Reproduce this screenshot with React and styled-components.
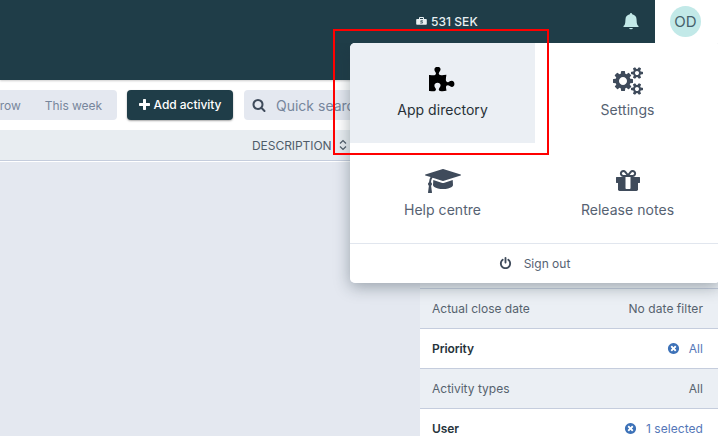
import React from "react";
import styled, { createGlobalStyle, css } from "styled-components";

const GlobalStyle = createGlobalStyle`
  *, *::before, *::after { box-sizing: border-box; }
  body { margin: 0; overflow: hidden; }
  button { font: inherit; letter-spacing: inherit; border: 0; padding: 0; background: none; color: inherit; }
`;

const ICONS = {
  puzzle: {
    width: 1664,
    minX: 128,
    d: "M1755 1083q0 81-44.5 135t-123.5 54q-41 0-77.5-17.5t-59-38-56.5-38-71-17.5q-110 0-110 124 0 39 16 115t15 115v5q-22 0-33 1-34 3-97.5 11.5t-115.5 13.5-98 5q-61 0-103-26.5t-42-83.5q0-37 17.5-71t38-56.5 38-59 17.5-77.5q0-79-54-123.5t-135-44.5q-84 0-143 45.5t-59 127.5q0 43 15 83t33.5 64.5 33.5 53 15 50.5q0 45-46 89-37 35-117 35-95 0-245-24-9-2-27.5-4t-27.5-4l-13-2q-1 0-3-1-2 0-2-1v-1024q2 1 17.5 3.5t34 5 21.5 3.5q150 24 245 24 80 0 117-35 46-44 46-89 0-22-15-50.5t-33.5-53-33.5-64.5-15-83q0-82 59-127.5t144-45.5q80 0 134 44.5t54 123.5q0 41-17.5 77.5t-38 59-38 56.5-17.5 71q0 57 42 83.5t103 26.5q64 0 180-15t163-17v2q-1 2-3.5 17.5t-5 34-3.5 21.5q-24 150-24 245 0 80 35 117 44 46 89 46 22 0 50.5-15t53-33.5 64.5-33.5 83-15q82 0 127.5 59t45.5 143z",
  },
  cogs: {
    width: 1920,
    d: "M896 896q0-106-75-181t-181-75-181 75-75 181 75 181 181 75 181-75 75-181zm768 512q0-52-38-90t-90-38-90 38-38 90q0 53 37.5 90.5t90.5 37.5 90.5-37.5 37.5-90.5zm0-1024q0-52-38-90t-90-38-90 38-38 90q0 53 37.5 90.5t90.5 37.5 90.5-37.5 37.5-90.5zm-384 421v185q0 10-7 19.5t-16 10.5l-155 24q-11 35-32 76 34 48 90 115 7 11 7 20 0 12-7 19-23 30-82.5 89.5t-78.5 59.5q-11 0-21-7l-115-90q-37 19-77 31-11 108-23 155-7 24-30 24h-186q-11 0-20-7.5t-10-17.5l-23-153q-34-10-75-31l-118 89q-7 7-20 7-11 0-21-8-144-133-144-160 0-9 7-19 10-14 41-53t47-61q-23-44-35-82l-152-24q-10-1-17-9.5t-7-19.5v-185q0-10 7-19.5t16-10.5l155-24q11-35 32-76-34-48-90-115-7-11-7-20 0-12 7-20 22-30 82-89t79-59q11 0 21 7l115 90q34-18 77-32 11-108 23-154 7-24 30-24h186q11 0 20 7.5t10 17.5l23 153q34 10 75 31l118-89q8-7 20-7 11 0 21 8 144 133 144 160 0 8-7 19-12 16-42 54t-45 60q23 48 34 82l152 23q10 2 17 10.5t7 19.5zm640 533v140q0 16-149 31-12 27-30 52 51 113 51 138 0 4-4 7-122 71-124 71-8 0-46-47t-52-68q-20 2-30 2t-30-2q-14 21-52 68t-46 47q-2 0-124-71-4-3-4-7 0-25 51-138-18-25-30-52-149-15-149-31v-140q0-16 149-31 13-29 30-52-51-113-51-138 0-4 4-7 4-2 35-20t59-34 30-16q8 0 46 46.5t52 67.5q20-2 30-2t30 2q51-71 92-112l6-2q4 0 124 70 4 3 4 7 0 25-51 138 17 23 30 52 149 15 149 31zm0-1024v140q0 16-149 31-12 27-30 52 51 113 51 138 0 4-4 7-122 71-124 71-8 0-46-47t-52-68q-20 2-30 2t-30-2q-14 21-52 68t-46 47q-2 0-124-71-4-3-4-7 0-25 51-138-18-25-30-52-149-15-149-31v-140q0-16 149-31 13-29 30-52-51-113-51-138 0-4 4-7 4-2 35-20t59-34 30-16q8 0 46 46.5t52 67.5q20-2 30-2t30 2q51-71 92-112l6-2q4 0 124 70 4 3 4 7 0 25-51 138 17 23 30 52 149 15 149 31z",
  },
  graduation: {
    width: 2304,
    d: "M1774 836l18 316q4 69-82 128t-235 93.5-323 34.5-323-34.5-235-93.5-82-128l18-316 574 181q22 7 48 7t48-7zm530-324q0 23-22 31l-1120 352q-4 1-10 1t-10-1l-652-206q-43 34-71 111.5t-34 178.5q63 36 63 109 0 69-58 107l58 433q2 14-8 25-9 11-24 11h-192q-15 0-24-11-10-11-8-25l58-433q-58-38-58-107 0-73 65-111 11-207 98-330l-333-104q-22-8-22-31t22-31l1120-352q4-1 10-1t10 1l1120 352q22 8 22 31z",
  },
  gift: {
    width: 1792,
    d: "M1056 1356v-716h-320v716q0 25 18 38.5t46 13.5h192q28 0 46-13.5t18-38.5zm-456-844h195l-126-161q-26-31-69-31-40 0-68 28t-28 68 28 68 68 28zm688-96q0-40-28-68t-68-28q-43 0-69 31l-125 161h194q40 0 68-28t28-68zm376 256v320q0 14-9 23t-23 9h-96v416q0 40-28 68t-68 28h-1088q-40 0-68-28t-28-68v-416h-96q-14 0-23-9t-9-23v-320q0-14 9-23t23-9h440q-93 0-158.5-65.5t-65.5-158.5 65.5-158.5 158.5-65.5q107 0 168 77l128 165 128-165q61-77 168-77 93 0 158.5 65.5t65.5 158.5-65.5 158.5-158.5 65.5h440q14 0 23 9t9 23z",
  },
  power: {
    width: 1792,
    d: "M1664 896q0 156-61 298t-164 245-245 164-298 61-298-61-245-164-164-245-61-298q0-182 80.5-343t226.5-270q43-32 95.5-25t83.5 50q32 42 24.5 94.5t-49.5 84.5q-98 74-151.5 181t-53.5 228q0 104 40.5 198.5t109.5 163.5 163.5 109.5 198.5 40.5 198.5-40.5 163.5-109.5 109.5-163.5 40.5-198.5q0-121-53.5-228t-151.5-181q-42-32-49.5-84.5t24.5-94.5q31-43 84-50t95 25q146 109 226.5 270t80.5 343zm-640-768v640q0 52-38 90t-90 38-90-38-38-90v-640q0-52 38-90t90-38 90 38 38 90z",
  },
  clear: {
    width: 1792,
    d: "M1277 1122q0-26-19-45l-181-181 181-181q19-19 19-45 0-27-19-46l-90-90q-19-19-46-19-26 0-45 19l-181 181-181-181q-19-19-45-19-27 0-46 19l-90 90q-19 19-19 46 0 26 19 45l181 181-181 181q-19 19-19 45 0 27 19 46l90 90q19 19 46 19 26 0 45-19l181-181 181 181q19 19 45 19 27 0 46-19l90-90q19-19 19-46zm387-226q0 209-103 385.5t-279.5 279.5-385.5 103-385.5-103-279.5-279.5-103-385.5 103-385.5 279.5-279.5 385.5-103 385.5 103 279.5 279.5 103 385.5z",
  },
  search: {
    width: 1792,
    d: "M1216 832q0-185-131.5-316.5t-316.5-131.5-316.5 131.5-131.5 316.5 131.5 316.5 316.5 131.5 316.5-131.5 131.5-316.5zm512 832q0 52-38 90t-90 38q-54 0-90-38l-343-342q-179 124-399 124-143 0-273.5-55.5t-225-150-150-225-55.5-273.5 55.5-273.5 150-225 225-150 273.5-55.5 273.5 55.5 225 150 150 225 55.5 273.5q0 220-124 399l343 343q37 37 37 90z",
  },
  plus: {
    width: 1408,
    minX: 192,
    d: "M1600 736v192q0 40-28 68t-68 28h-416v416q0 40-28 68t-68 28h-192q-40 0-68-28t-28-68v-416h-416q-40 0-68-28t-28-68v-192q0-40 28-68t68-28h416v-416q0-40 28-68t68-28h192q40 0 68 28t28 68v416h416q40 0 68 28t28 68z",
  },
};

const Svg = styled.svg`
  display: block;
  flex: none;
  fill: currentColor;
`;

function Icon({ name, size }) {
  const { width, minX = 0, d } = ICONS[name];
  return (
    <Svg
      width={(width / 1792) * size}
      height={size}
      viewBox={`${minX} 0 ${width} 1792`}
      aria-hidden="true"
    >
      <path d={d} />
    </Svg>
  );
}

const Page = styled.div`
  position: relative;
  display: flex;
  flex-direction: column;
  width: 718px;
  height: 436px;
  overflow: hidden;
  background: #e4e8f0;
  font-family: Inter, "Liberation Sans", sans-serif;
  font-size: 12px;
  color: #3f4b5b;
  white-space: nowrap;
`;

const Header = styled.header`
  position: relative;
  display: flex;
  flex: none;
  height: 80px;
  padding-left: 415px;
  background: #1f3d48;
  box-shadow: 0 1px 2px rgba(0, 0, 0, 0.2);
`;

const Pipeline = styled.div`
  display: flex;
  align-items: center;
  gap: 4px;
  height: 43px;
  width: 192px;
  padding-left: 1px;
  font-size: 12px;
  font-weight: 500;
  letter-spacing: 0.05px;
  color: #e8f0f2;
`;

const NotificationButton = styled.button`
  display: flex;
  align-items: center;
  justify-content: center;
  width: 48px;
  height: 43px;
  color: #c2e9e8;
`;

const Account = styled.div`
  display: flex;
  align-items: center;
  flex: 1;
  height: 48px;
  padding: 0 0 5px 15px;
  background: #fff;
`;

const Avatar = styled.div`
  display: flex;
  align-items: center;
  justify-content: center;
  width: 31px;
  height: 31px;
  border-radius: 50%;
  background: #c2e9e8;
  color: #45606b;
  font-size: 15px;
`;

const Toolbar = styled.div`
  display: flex;
  align-items: center;
  flex: none;
  gap: 10px;
  height: 50px;
  background: #fff;
`;

const PeriodGroup = styled.div`
  display: flex;
  align-items: center;
  justify-content: flex-end;
  gap: 24px;
  width: 117px;
  height: 30px;
  padding-right: 15px;
  border-radius: 0 4px 4px 0;
  background: #e4e8f0;
  color: #77869c;
  font-size: 12px;
  letter-spacing: -0.05px;
`;

const AddButton = styled.button`
  display: flex;
  align-items: center;
  justify-content: center;
  gap: 4px;
  width: 106px;
  height: 30px;
  padding-bottom: 1px;
  border-radius: 4px;
  background: #1f3d48;
  box-shadow: 0 1px 2px rgba(0, 0, 0, 0.35);
  color: #fff;
  font-size: 12px;
  font-weight: 500;
  letter-spacing: -0.05px;
`;

const SearchBox = styled.div`
  display: flex;
  align-items: center;
  gap: 10px;
  flex: 1;
  height: 30px;
  padding-left: 8px;
  margin-left: 1px;
  border-radius: 4px;
  background: #e4e8f0;
  color: #3f4b5b;
`;

const Placeholder = styled.span`
  color: #77869c;
  font-size: 14px;
`;

const TableHead = styled.div`
  display: flex;
  align-items: center;
  flex: none;
  gap: 7px;
  height: 32px;
  padding: 0 0 1px 252px;
  border-bottom: 1px solid #fff;
  box-shadow: inset 0 -1px #c5cddd;
  background: #e8edf1;
  color: #4f5c69;
  font-size: 12px;
  letter-spacing: -0.05px;
`;

const Content = styled.main`
  display: flex;
  flex: 1;
  min-height: 0;
  justify-content: flex-end;
`;

const FilterPanel = styled.aside`
  width: 298px;
  padding-top: 126px;
  background: #ebeff4;
`;

const FilterRow = styled.div`
  display: flex;
  align-items: center;
  justify-content: space-between;
  height: 40px;
  padding: 0 15px 0 12px;
  border-top: 1px solid #c5cddd;
  background: ${(p) => (p.$active ? "#fff" : "#ebeff4")};
  color: #56626e;
  font-size: 12px;
`;

const FilterLabel = styled.span`
  ${(p) =>
    p.$active &&
    css`
      color: #26333b;
      font-weight: 600;
      letter-spacing: -0.08px;
    `}
`;

const FilterValue = styled.span`
  display: flex;
  align-items: center;
  gap: 9px;
  letter-spacing: 0.06px;
  ${(p) => p.$active && "color: #5577b8;"}

  svg { color: #3d72b8; }
`;

const Menu = styled.nav`
  position: absolute;
  top: 43px;
  left: 350px;
  width: 370px;
  height: 240px;
  overflow: hidden;
  border-radius: 5px;
  background: #fff;
`;

const MenuShadow = styled.div`
  position: absolute;
  top: 43px;
  left: 350px;
  width: 370px;
  height: 240px;
  border-radius: 5px;
  box-shadow: 0 4px 16px rgba(31, 50, 60, 0.38);
  clip-path: inset(0 -20px -30px -30px);
`;

const MenuGrid = styled.div`
  display: grid;
  grid-template-columns: 185px 185px;
  grid-auto-rows: 100px;
`;

const MenuItem = styled.button`
  display: flex;
  flex-direction: column;
  align-items: center;
  padding-top: 24px;
  gap: 6px;
  background: ${(p) => (p.$selected ? "#ebeff4" : "#fff")};
  color: ${(p) => (p.$selected ? "#000" : "#3f4b5b")};

  svg { margin-left: ${(p) => (p.$selected ? "-1px" : 0)}; }
`;

const MenuLabel = styled.span`
  font-size: 14px;
  line-height: 18px;
  letter-spacing: 0.04px;
  color: ${(p) => (p.$selected ? "#273037" : "#566272")};
`;

const SignOut = styled.button`
  display: flex;
  align-items: center;
  justify-content: center;
  gap: 12px;
  width: 100%;
  height: 40px;
  padding-right: 1px;
  border-top: 1px solid #e1e6ee;
  font-size: 12px;
`;

const SignOutLabel = styled.span`
  color: #566272;
`;

const Highlight = styled.div`
  position: absolute;
  top: 29px;
  left: 333px;
  width: 216px;
  height: 126px;
  border: 2px solid #ff0000;
  pointer-events: none;
`;

const MENU = [
  { icon: "puzzle", label: "App directory", selected: true },
  { icon: "cogs", label: "Settings" },
  { icon: "graduation", label: "Help centre" },
  { icon: "gift", label: "Release notes" },
];

const FILTERS = [
  { label: "Actual close date", value: "No date filter" },
  { label: "Priority", value: "All", active: true },
  { label: "Activity types", value: "All" },
  { label: "User", value: "1 selected", active: true },
];

function CaseIcon() {
  return (
    <Svg width="11" height="9" viewBox="0 0 11 9" aria-hidden="true">
      <path
        fillRule="evenodd"
        d="M3 2V1q0-1 1-1h3q1 0 1 1v1h2q.8 0 .8.8V7q0 .8-.8.8H1Q.2 7.800.2 7V2.800Q.2 2 1 2zM4 2h3V1H4z"
      />
      <path d="M6.900 3.700H4.800v1.100h1.600v1.300H4.200" fill="none" stroke="#1f3d48" strokeWidth=".7" />
    </Svg>
  );
}

function BellIcon() {
  return (
    <Svg width="16" height="17" viewBox="0 0 16 17" aria-hidden="true">
      <path d="M8 0q1 0 1.200 1.300Q13.300 2.200 13.500 6q.1 4.200.9 5.900l1.100 1.100v.9H.5V13l1.100-1.100Q2.400 10.200 2.500 6 2.700 2.200 6.800 1.300 7 0 8 0z" />
      <path d="M6 15h4q-.5 1.200-2 1.200T6 15z" />
    </Svg>
  );
}

function SortIcon() {
  return (
    <Svg width="8" height="12" viewBox="0 0 8 12" aria-hidden="true">
      <path d="M1 4.500 4 1.500l3 3M1 7.500l3 3 3-3" fill="none" stroke="currentColor" strokeWidth="1.200" />
    </Svg>
  );
}

export default function App() {
  return (
    <>
      <GlobalStyle />
      <Page>
        <Header>
          <Pipeline>
            <CaseIcon />
            531 SEK
          </Pipeline>
          <NotificationButton aria-label="Notifications">
            <BellIcon />
          </NotificationButton>
          <Account>
            <Avatar>OD</Avatar>
          </Account>
        </Header>
        <Toolbar>
          <PeriodGroup>
            <span>Tomorrow</span>
            <span>This week</span>
          </PeriodGroup>
          <AddButton>
            <Icon name="plus" size={14} />
            Add activity
          </AddButton>
          <SearchBox>
            <Icon name="search" size={14} />
            <Placeholder>Quick search</Placeholder>
          </SearchBox>
        </Toolbar>
        <TableHead>
          DESCRIPTION
          <SortIcon />
        </TableHead>
        <Content>
          <FilterPanel>
            {FILTERS.map(({ label, value, active }) => (
              <FilterRow key={label} $active={active}>
                <FilterLabel $active={active}>{label}</FilterLabel>
                <FilterValue $active={active}>
                  {active && <Icon name="clear" size={13} />}
                  {value}
                </FilterValue>
              </FilterRow>
            ))}
          </FilterPanel>
        </Content>
        <MenuShadow />
        <Menu>
          <MenuGrid>
            {MENU.map(({ icon, label, selected }) => (
              <MenuItem key={label} $selected={selected}>
                <Icon name={icon} size={28} />
                <MenuLabel $selected={selected}>{label}</MenuLabel>
              </MenuItem>
            ))}
          </MenuGrid>
          <SignOut>
            <Icon name="power" size={13} />
            <SignOutLabel>Sign out</SignOutLabel>
          </SignOut>
        </Menu>
        <Highlight />
      </Page>
    </>
  );
}
